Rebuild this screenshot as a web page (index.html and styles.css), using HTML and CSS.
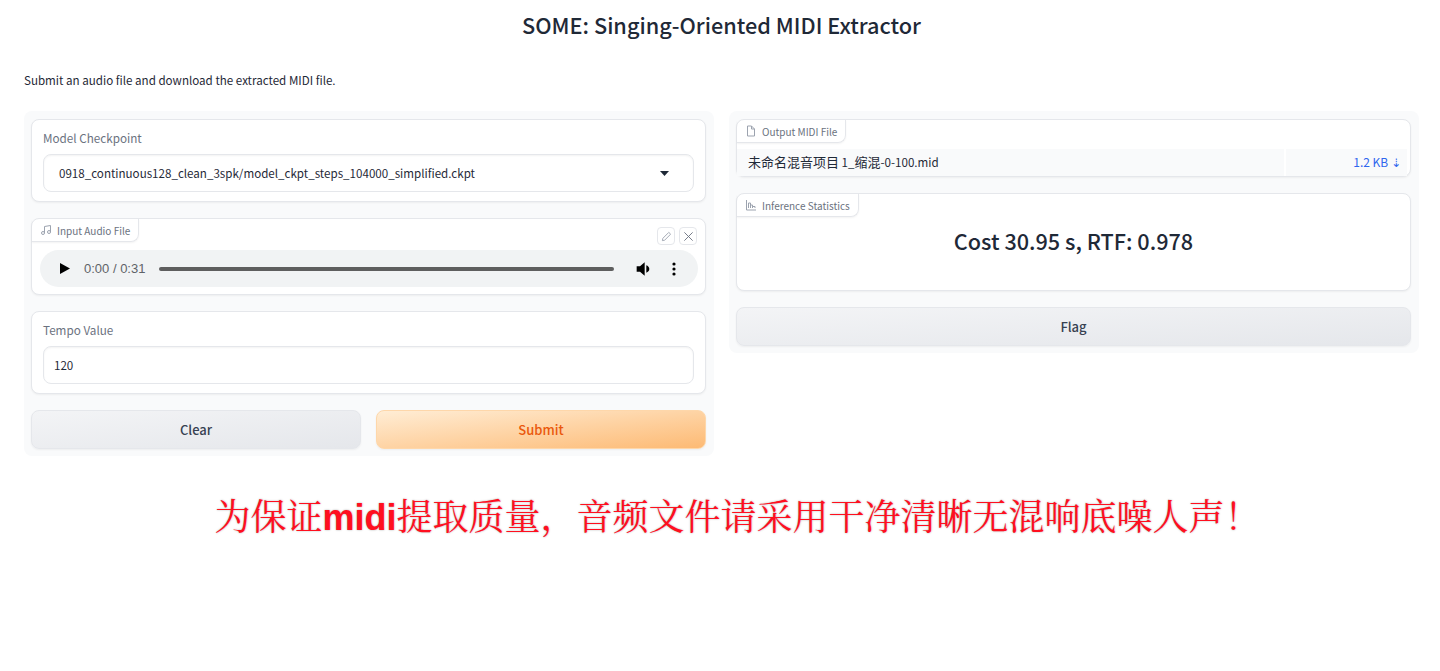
FILE: index.html
```html
<html>
<head>
  <meta charset="utf-8">
  <meta name="viewport" content="width=device-width, initial-scale=1">
  <title>SOME: Singing-Oriented MIDI Extractor</title>
  <link rel="stylesheet" href="styles.css">
</head>
<body>
  <div class="container">
    <h1 class="title">SOME: Singing-Oriented MIDI Extractor</h1>
    <p class="desc">Submit an audio file and download the extracted MIDI file.</p>

    <div class="columns">
      <div class="panel">
        <div class="card field">
          <div class="field-label">Model Checkpoint</div>
          <div class="input-box">
            <span>0918_continuous128_clean_3spk/model_ckpt_steps_104000_simplified.ckpt</span>
            <svg class="caret" width="10" height="5" viewBox="0 0 10 5"><path d="M0 0h9L4.500 5z" fill="#1f2937"/></svg>
          </div>
        </div>

        <div class="card audio-card">
          <div class="badge">
            <svg class="badge-icon" width="12" height="12" viewBox="0 0 24 24" fill="none" stroke="#9ca3af" stroke-width="2"><path d="M9 18V5l12-2v13"/><circle cx="6" cy="18" r="3"/><circle cx="18" cy="16" r="3"/></svg>
            Input Audio File
          </div>
          <div class="tools">
            <div class="tool"><svg width="11" height="11" viewBox="0 0 24 24" fill="none" stroke="#9ca3af" stroke-width="2"><path d="M17 3l4 4L8 20l-5 1 1-5z"/></svg></div>
            <div class="tool"><svg width="11" height="11" viewBox="0 0 24 24" fill="none" stroke="#6b7280" stroke-width="2"><path d="M3 3l18 18M21 3L3 21"/></svg></div>
          </div>
          <div class="player">
            <svg class="play" width="10" height="11" viewBox="0 0 10 11"><path d="M0 0l10 5.500L0 11z" fill="#000"/></svg>
            <span class="time">0:00 / 0:31</span>
            <div class="track"></div>
            <svg class="volume" width="16" height="16" viewBox="0 0 24 24"><path d="M1 8v8h5l7 6V2L6 8z" fill="#000"/><path d="M15.500 6.500v11c2.500-1 4.500-3 4.500-5.500s-2-4.500-4.500-5.500z" fill="#000"/></svg>
            <svg class="dots" width="4" height="14" viewBox="0 0 4 14"><circle cx="2" cy="2" r="1.600"/><circle cx="2" cy="7" r="1.600"/><circle cx="2" cy="12" r="1.600"/></svg>
          </div>
        </div>

        <div class="card field">
          <div class="field-label">Tempo Value</div>
          <div class="input-box"><span class="tempo">120</span></div>
        </div>

        <div class="btn-row">
          <button class="btn">Clear</button>
          <button class="btn btn-primary">Submit</button>
        </div>
      </div>

      <div class="panel">
        <div class="card file-card">
          <div class="badge">
            <svg class="badge-icon" width="12" height="12" viewBox="0 0 24 24" fill="none" stroke="#9ca3af" stroke-width="2"><path d="M13 2H5v20h14V8z"/><path d="M13 2v6h6"/></svg>
            Output MIDI File
          </div>
          <div class="file-row">
            <div class="file-name">未命名混音项目<span class="latin"> 1_</span>缩混<span class="latin">-0-100.mid</span></div>
            <div class="file-size">1.2 KB <span class="down">⇣</span></div>
          </div>
        </div>

        <div class="card stats-card">
          <div class="badge">
            <svg class="badge-icon" width="12" height="12" viewBox="0 0 24 24" fill="none" stroke="#9ca3af" stroke-width="2"><path d="M3 2v20h19"/><path d="M7 18V8h4v10M11 18v-6h4v6M15 18v-3h5v3"/></svg>
            Inference Statistics
          </div>
          <div class="stats-text">Cost 30.95 s, RTF: 0.978</div>
        </div>

        <button class="btn btn-flag">Flag</button>
      </div>
    </div>

    <div class="notice">为保证<b>midi</b>提取质量，音频文件请采用干净清晰无混响底噪人声！</div>
  </div>
</body>
</html>
```

FILE: styles.css
```css
* {
  box-sizing: border-box;
}

body {
  margin: 0;
  background-color: #fff;
  color: #1f2937;
  font-family: "Noto Sans CJK SC", "Noto Sans", sans-serif;
}

.container {
  padding: 0 21px 0 24px;
}

.title {
  margin: 0;
  padding-top: 8px;
  height: 50px;
  font-size: 21.700px;
  line-height: 34px;
  font-weight: 500;
  text-align: center;
}

.desc {
  margin: 0;
  padding-top: 20px;
  height: 61px;
  font-size: 11.600px;
  line-height: 21px;
}

/* columnas */
.columns {
  display: flex;
  align-items: flex-start;
  gap: 15px;
}

.panel {
  flex: 1;
  display: flex;
  flex-direction: column;
  gap: 16px;
  padding: 8px 8px 7px 7px;
  background-color: #f9fafb;
  border-radius: 8px;
}

.card {
  position: relative;
  background-color: #fff;
  border: 1px solid #e5e7eb;
  border-radius: 8px;
  box-shadow: 0 1px 2px rgba(0, 0, 0, 0.05);
}

/* campos */
.field {
  height: 83px;
  padding: 8px 11px 0;
}

.field-label {
  color: #6b7280;
  font-size: 11.700px;
  line-height: 20px;
  margin-bottom: 6px;
}

.input-box {
  display: flex;
  align-items: center;
  justify-content: space-between;
  height: 38px;
  padding: 0 23px 0 15px;
  border: 1px solid #e5e7eb;
  border-radius: 8px;
  box-shadow: inset 0 1px 2px rgba(0, 0, 0, 0.05);
  font-size: 11.600px;
}

.tempo {
  margin-left: -5px;
}

/* etiqueta */
.badge {
  display: inline-flex;
  align-items: center;
  height: 23px;
  padding: 0 8px;
  color: #6b7280;
  font-size: 10px;
  border-right: 1px solid #e5e7eb;
  border-bottom: 1px solid #e5e7eb;
  border-bottom-right-radius: 8px;
  box-shadow: 0 1px 2px rgba(0, 0, 0, 0.05);
}

.badge-icon {
  margin-right: 5px;
}

/* audio */
.audio-card {
  height: 77px;
}

.tools {
  position: absolute;
  top: 8px;
  right: 8px;
  display: flex;
  gap: 4px;
}

.tool {
  display: flex;
  align-items: center;
  justify-content: center;
  width: 18px;
  height: 18px;
  border: 1px solid #e5e7eb;
  border-radius: 4px;
}

.player {
  display: flex;
  align-items: center;
  height: 37px;
  margin: 8px 7px 0 8px;
  padding: 0 22px 0 20px;
  background-color: #f1f3f4;
  border-radius: 19px;
}

.time {
  margin-left: 14px;
  color: #5f6368;
  font-family: "Liberation Sans", sans-serif;
  font-size: 13px;
  width: 75px;
  flex-shrink: 0;
}

.track {
  flex: 1;
  height: 4px;
  background-color: #5e5e5e;
  border-radius: 2px;
}

.volume {
  margin-left: 22px;
}

.dots {
  margin-left: 20px;
}

/* botones */
.btn-row {
  display: flex;
  gap: 15px;
}

.btn {
  flex: 1;
  height: 39px;
  padding: 0;
  border: 1px solid #e5e7eb;
  border-radius: 8px;
  background: linear-gradient(to bottom right, #f3f4f6, #e5e7eb);
  box-shadow: 0 1px 2px rgba(0, 0, 0, 0.05);
  color: #374151;
  font-family: inherit;
  font-size: 13px;
  font-weight: 500;
}

.btn-flag {
  flex: none;
}

.btn-primary {
  border-color: #fed7aa;
  background: linear-gradient(to bottom right, #ffedd5, #fdba74);
  color: #ea580c;
}

/* archivo */
.file-card {
  height: 58px;
}

.file-row {
  display: flex;
  gap: 2px;
  height: 27px;
  margin: 6px 3px 0 0;
  font-size: 13px;
  line-height: 25px;
}

.latin {
  font-size: 11.600px;
}

.file-name {
  flex: 1;
  padding-left: 11px;
  background-color: #f9fafb;
}

.file-size {
  width: 121px;
  padding-right: 6px;
  text-align: right;
  color: #2f66ee;
  font-size: 12px;
  background-color: #f9fafb;
}

.down {
  font-family: "DejaVu Sans", sans-serif;
}

/* estadisticas */
.stats-card {
  height: 98px;
}

.stats-text {
  margin-top: 7px;
  text-align: center;
  font-size: 21.650px;
  line-height: 34px;
  font-weight: 500;
}

/* aviso */
.notice {
  margin-top: 32px;
  padding-left: 32px;
  text-align: center;
  color: #ff0f1f;
  font-family: "Noto Serif CJK SC", "Noto Sans CJK SC", serif;
  font-size: 36px;
  line-height: 54px;
  white-space: nowrap;
  text-shadow: 0 0 2px rgba(0, 0, 0, 0.35);
}

.notice b {
  font-family: "Liberation Sans", sans-serif;
}
```
